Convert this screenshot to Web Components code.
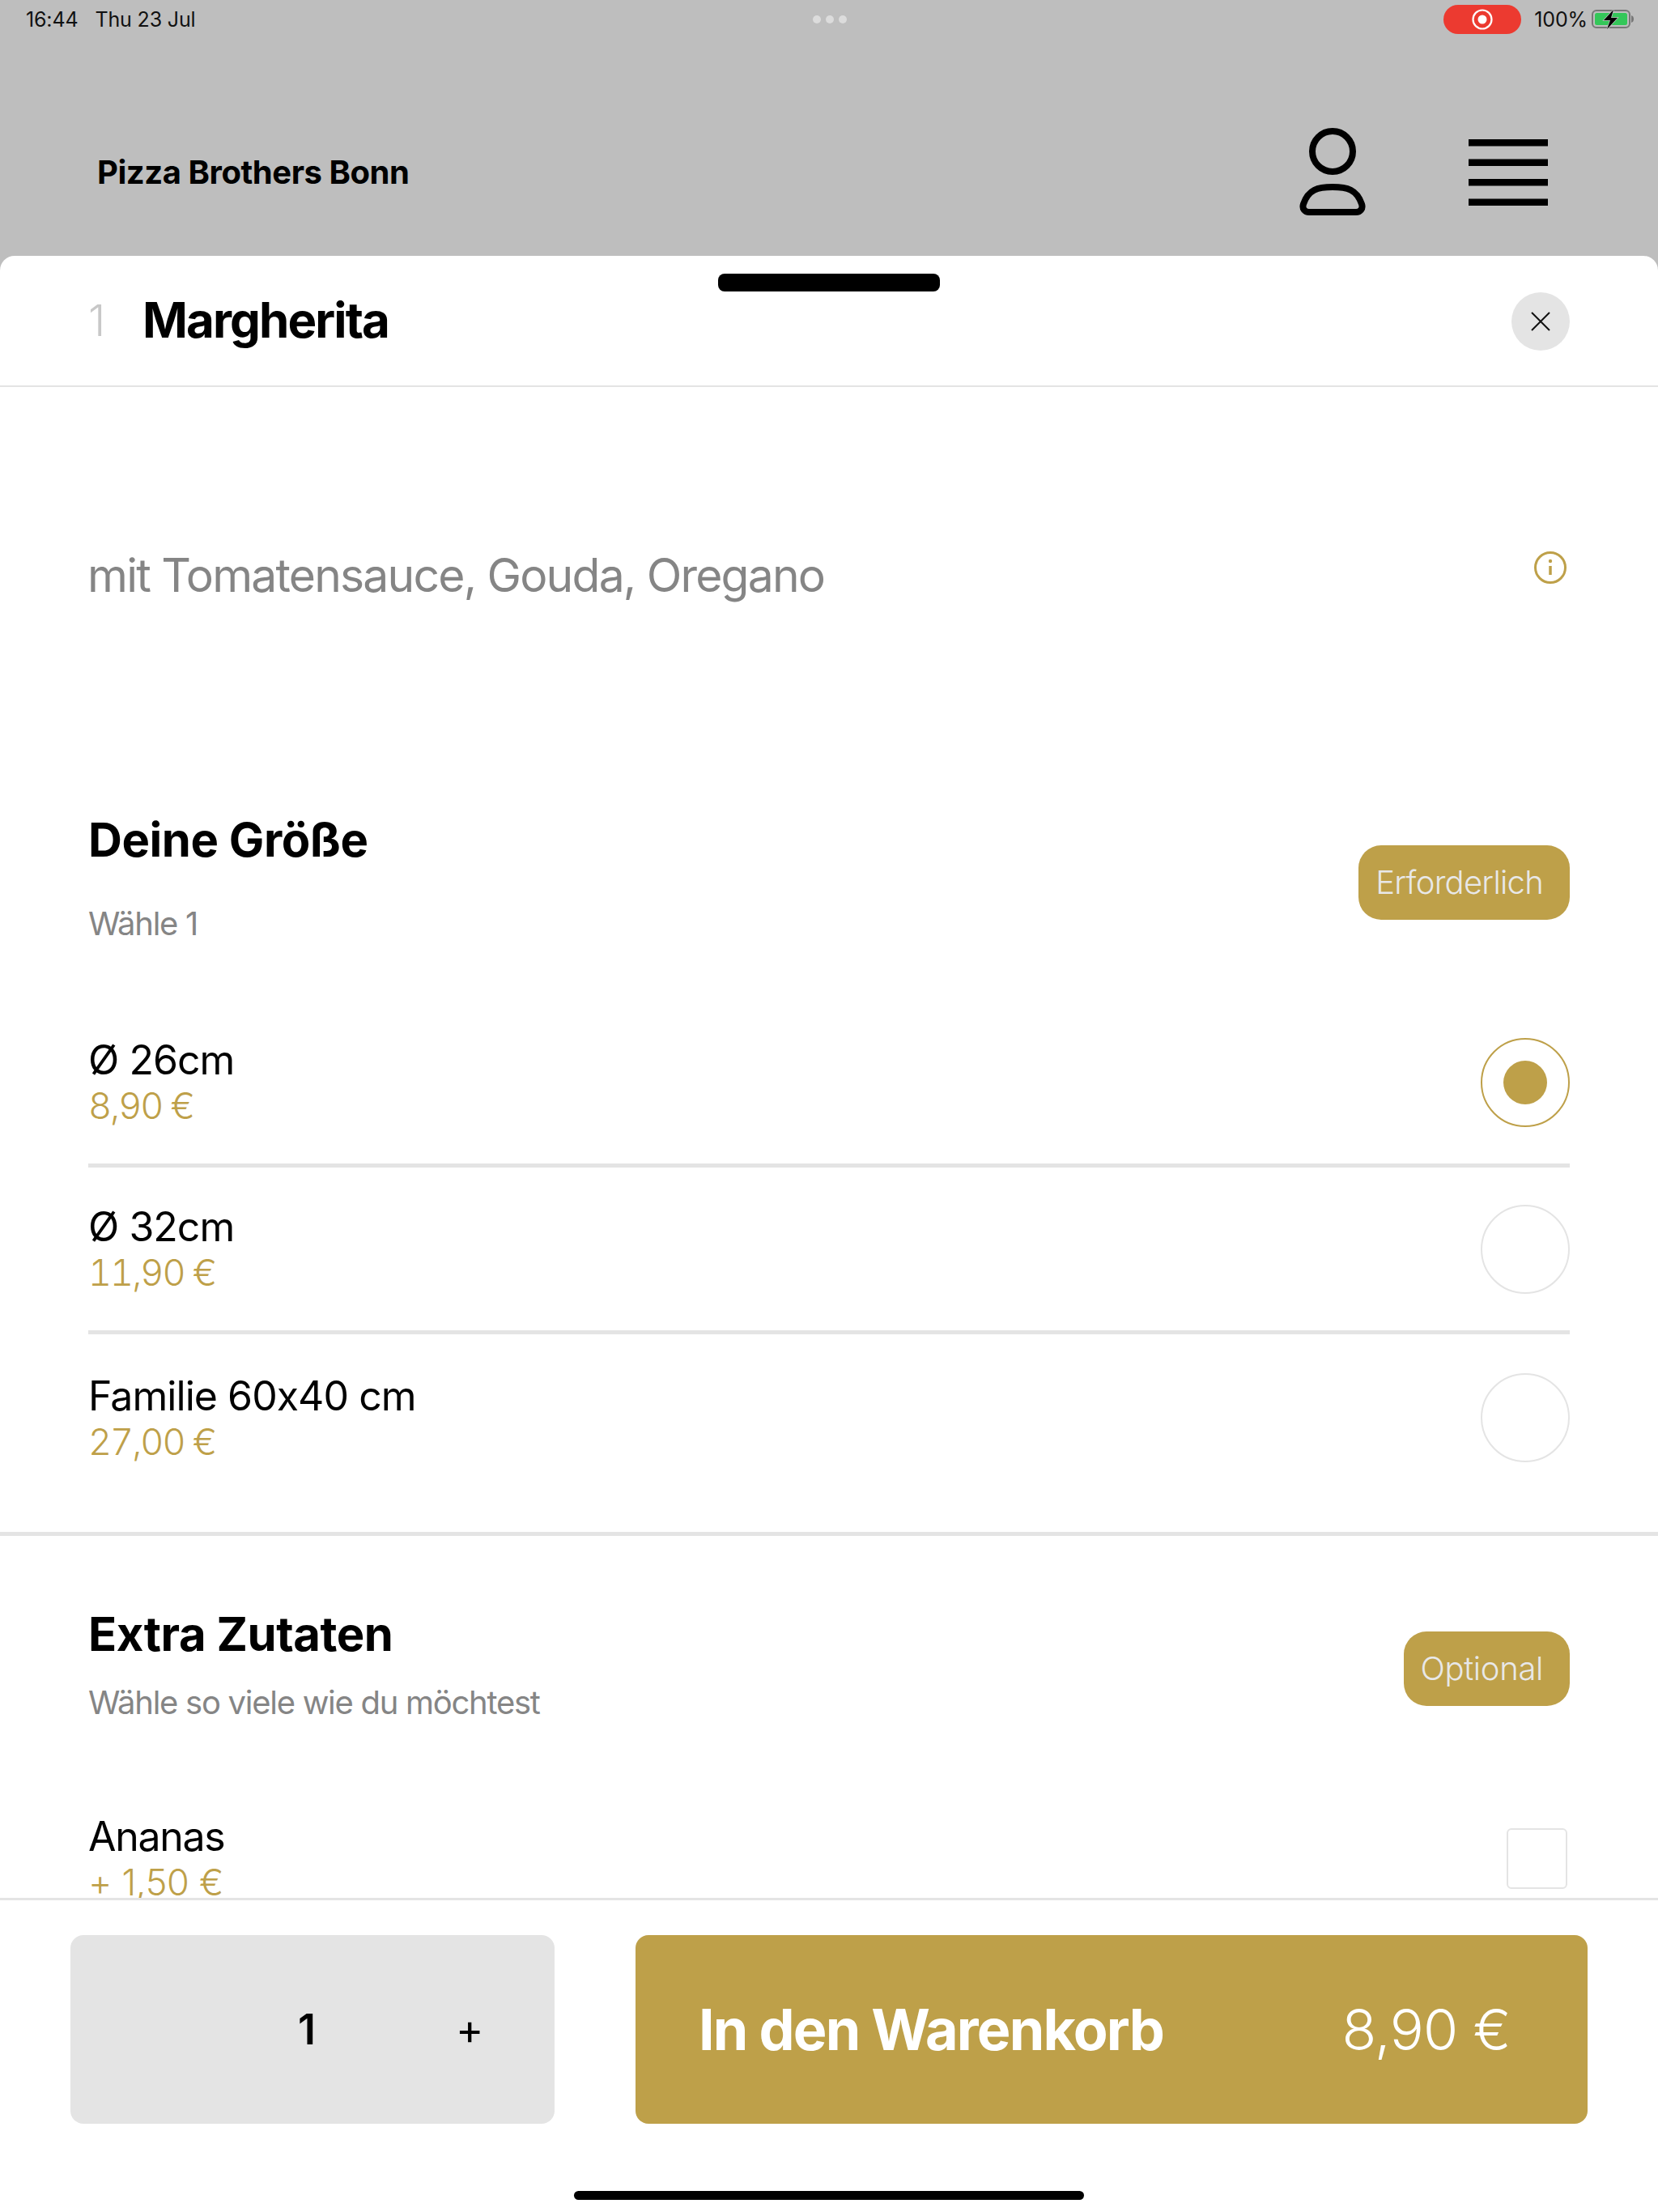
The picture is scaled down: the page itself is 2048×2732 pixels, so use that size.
<!DOCTYPE html>
<html lang="de">
<head>
<meta charset="UTF-8">
<title>Pizza Brothers Bonn</title>
<style>
    html, body { margin: 0; padding: 0; background: #fff; }
    body { font-family: Inter, "Liberation Sans", sans-serif; }
</style>
</head>
<body>
<pizza-app></pizza-app>

<script>
    const GOLD = '#bea049';

    // helper, every component gets its markup and style the same way
    class Base extends HTMLElement {
        constructor() {
            super();
            this.attachShadow({ mode: 'open' });
        }
        connectedCallback() {
            this.shadowRoot.innerHTML = `<style>${this.css()}</style>${this.html()}`;
        }
        css() { return ':host { display: block; }'; }
        html() { return '<slot></slot>'; }
    }

    class StatusBar extends Base {
        css() {
            return `
            :host { display: flex; align-items: center; height: 48px; padding: 0 30px 0 32px; font-size: 25px; color: #111; letter-spacing: -0.15px; }
            .side { flex: 1 1 0; display: flex; align-items: center; }
            .right { justify-content: flex-end; }
            .date { margin-left: 21px; }
            .dots { display: flex; justify-content: center; gap: 6px; }
            .dots i { width: 10px; height: 10px; border-radius: 50%; background: #dcdcdc; }
            .rec { width: 96px; height: 36px; border-radius: 18px; background: #ec3a30; display: flex; align-items: center; justify-content: center; margin-right: 16px; }
            .pct { margin-right: 5px; }
            svg { display: block; }`;
        }
        html() {
            return `
            <div class="side"><span>16:44</span><span class="date">Thu 23 Jul</span></div>
            <div class="dots"><i></i><i></i><i></i></div>
            <div class="side right">
                <div class="rec">
                    <svg width="26" height="26" viewBox="0 0 26 26"><circle cx="13" cy="13" r="11.5" fill="none" stroke="#fff" stroke-width="2.2"/><circle cx="13" cy="13" r="5.5" fill="#fff"/></svg>
                </div>
                <span class="pct">100%</span>
                <svg width="52" height="28" viewBox="0 0 52 28">
                    <rect x="1" y="3" width="46" height="21" rx="5" fill="none" stroke="#777" stroke-width="2"/>
                    <rect x="4" y="6" width="40" height="15" rx="2.5" fill="#34c759"/>
                    <path d="M49 9c2 .6 3 2.200 3 4.500s-1 3.900-3 4.500z" fill="#777"/>
                    <path d="M27 2 15 15h8l-4 11 13-14h-8z" fill="#000" stroke="#bebebe" stroke-width="1.5" paint-order="stroke"/>
                </svg>
            </div>`;
        }
    }

    class AppHeader extends Base {
        css() {
            return `
            :host { display: flex; align-items: center; box-sizing: border-box; height: 268px; padding: 62px 136px 0 120px; }
            .name { flex: 1; font-size: 40px; font-weight: 700; color: #000; letter-spacing: -0.45px; margin-top: -2px; }
            svg { display: block; }
            .person { margin-right: 122px; margin-top: -3px; }`;
        }
        html() {
            return `
            <div class="name">Pizza Brothers Bonn</div>
            <svg class="person" width="92" height="116" viewBox="0 0 92 116" fill="none" stroke="#000" stroke-width="8">
                <circle cx="46" cy="33" r="25"/>
                <path d="M46 77C64 77 76 80 82 98C84 104 80 108 75 108H17C12 108 8 104 10 98C16 80 28 77 46 77Z"/>
            </svg>
            <svg width="98" height="82" viewBox="0 0 98 82" fill="#000">
                <rect y="0" width="98" height="8.500"/><rect y="24.500" width="98" height="8.500"/><rect y="49" width="98" height="8.500"/><rect y="73.500" width="98" height="8.500"/>
            </svg>`;
        }
    }

    class SheetTitle extends Base {
        css() {
            return `
            :host { display: flex; align-items: center; flex: none; box-sizing: border-box; height: 162px; padding: 2px 109px 0; border-bottom: 2px solid #e4e4e4; }
            .num { width: 67px; font-size: 54px; font-weight: 300; color: #c8c8c8; margin-top: -3px; }
            .title { flex: 1; font-size: 60px; font-weight: 700; color: #000; letter-spacing: -1.9px; margin-top: -4px; }
            .close { width: 72px; height: 72px; border-radius: 50%; background: #e4e4e4; display: flex; align-items: center; justify-content: center; }`;
        }
        html() {
            return `
            <span class="num">1</span>
            <span class="title">Margherita</span>
            <div class="close"><svg width="24" height="24" viewBox="0 0 24 24" stroke="#111" stroke-width="2" fill="none"><path d="M1 1 23 23M23 1 1 23"/></svg></div>`;
        }
    }

    class MealInfo extends Base {
        css() {
            return `
            :host { display: flex; box-sizing: border-box; height: 524px; padding: 198px 109px 0 108px; font-size: 57px; font-weight: 400; color: #858585; letter-spacing: -1.8px; }
            .t { flex: 1; }
            svg { display: block; margin: 5px 4px 0 0; }`;
        }
        html() {
            return `
            <div class="t"><slot></slot></div>
            <svg width="40" height="40" viewBox="0 0 40 40" fill="none" stroke="${GOLD}"><circle cx="20" cy="20" r="18.500" stroke-width="3"/><path d="M20 18v11" stroke-width="3.500"/><circle cx="20" cy="12" r="2.200" fill="${GOLD}" stroke="none"/></svg>`;
        }
    }

    class GroupHead extends Base {
        css() {
            return `
            :host { display: flex; align-items: center; justify-content: space-between; box-sizing: border-box; padding: 0 109px; }
            .title { font-size: 58px; font-weight: 700; color: #000; letter-spacing: -0.45px; line-height: 70px; }
            .sub { font-size: 40px; font-weight: 400; color: #858585; letter-spacing: -1.28px; line-height: 50px; margin-top: var(--sub-gap, 0); }
            .pill { box-sizing: border-box; height: 92px; line-height: 92px; margin-top: 11px; padding: 0 33px 0 21px; border-radius: 28px; background: ${GOLD}; color: #e8e8e8; font-size: 40px; font-weight: 300; letter-spacing: var(--tag-ls, -0.75px); }`;
        }
        html() {
            return `
            <div><div class="title">${this.getAttribute('title')}</div><div class="sub">${this.getAttribute('sub')}</div></div>
            <div class="pill">${this.getAttribute('tag')}</div>`;
        }
    }

    class OptionRow extends Base {
        css() {
            return `
            :host { display: flex; align-items: center; justify-content: space-between; box-sizing: border-box; height: 206px; margin: 0 109px; border-bottom: var(--row-line, 5px solid #e4e4e4); }
            .name { font-size: 50px; font-weight: 400; color: #000; line-height: 59px; letter-spacing: -0.95px; }
            .price { font-size: 45px; font-weight: 300; color: ${GOLD}; line-height: 54px; letter-spacing: -2px; font-variant-numeric: tabular-nums; }
            .radio { box-sizing: border-box; width: 110px; height: 110px; border-radius: 50%; border: 2px solid #e4e4e4; display: flex; align-items: center; justify-content: center; }
            .radio.on { border-color: ${GOLD}; border-width: 2.500px; }
            .radio.on::after { content: ""; width: 54px; height: 54px; border-radius: 50%; background: ${GOLD}; }`;
        }
        html() {
            const on = this.hasAttribute('checked') ? ' on' : '';
            return `
            <div><div class="name">${this.getAttribute('name')}</div><div class="price">${this.getAttribute('price')}</div></div>
            <div class="radio${on}"></div>`;
        }
    }

    class ExtraRow extends Base {
        css() {
            return `
            :host { display: flex; justify-content: space-between; box-sizing: border-box; margin: 0 109px; }
            .name { font-size: 50px; font-weight: 400; color: #000; line-height: 59px; letter-spacing: -1.3px; margin-top: -2px; }
            .price { font-size: 45px; font-weight: 300; color: ${GOLD}; line-height: 54px; letter-spacing: -0.3px; }
            .box { box-sizing: border-box; width: 75px; height: 75px; margin: 17px 3px 0 0; border: 2.500px solid #e4e4e4; border-radius: 6px; }`;
        }
        html() {
            return `
            <div><div class="name">${this.getAttribute('name')}</div><div class="price">${this.getAttribute('price')}</div></div>
            <div class="box"></div>`;
        }
    }

    class OrderFooter extends Base {
        css() {
            return `
            :host { display: block; flex: none; box-sizing: border-box; height: 388px; border-top: 3px solid #e4e4e4; padding: 43px 87px 0; background: #fff; }
            .bar { display: flex; justify-content: space-between; height: 233px; }
            .qty { box-sizing: border-box; width: 598px; border-radius: 16px; background: #e4e4e4; display: flex; align-items: center; color: #000; padding-left: 281px; }
            .n { font-size: 52px; font-weight: 600; width: 195px; }
            .plus { font-size: 52px; font-weight: 400; }
            .add { box-sizing: border-box; width: 1176px; border-radius: 16px; background: ${GOLD}; color: #fff; display: flex; align-items: center; justify-content: space-between; padding: 0 95px 0 78px; font-size: 70px; }
            .label { font-weight: 700; letter-spacing: -1.8px; }
            .sum { font-weight: 300; letter-spacing: -0.7px; }
            .home { width: 630px; height: 11px; border-radius: 6px; background: #000; margin: 83px auto 0; }`;
        }
        html() {
            return `
            <div class="bar">
                <div class="qty"><span class="n">1</span><span class="plus">+</span></div>
                <div class="add"><span class="label">In den Warenkorb</span><span class="sum">8,90 €</span></div>
            </div>
            <div class="home"></div>`;
        }
    }

    class PizzaApp extends Base {
        css() {
            return `
            :host { display: flex; flex-direction: column; height: 2732px; width: 2048px; overflow: hidden; background: #bebebe; font-family: Inter, "Liberation Sans", sans-serif; }
            .sheet { position: relative; flex: 1; min-height: 0; display: flex; flex-direction: column; background: #fff; border-radius: 18px 18px 0 0; }
            .handle { position: absolute; left: 887px; top: 22px; width: 274px; height: 22px; border-radius: 8px; background: #000; }
            .scroll { flex: 1; min-height: 0; overflow: hidden; }
            .size { --sub-gap: 44px; }
            .rows { margin-top: 70px; }
            .last { --row-line: none; }
            .thick { height: 5px; margin-top: 38px; background: #e4e4e4; }
            .extra { --sub-gap: 25px; --tag-ls: -0.35px; margin-top: 86px; }
            .extra-row { margin-top: 113px; }`;
        }
        html() {
            return `
            <status-bar></status-bar>
            <app-header></app-header>
            <div class="sheet">
                <div class="handle"></div>
                <sheet-title></sheet-title>
                <div class="scroll">
                    <meal-info>mit Tomatensauce, Gouda, Oregano</meal-info>
                    <group-head class="size" title="Deine Größe" sub="Wähle 1" tag="Erforderlich"></group-head>
                    <div class="rows">
                        <option-row name="Ø 26cm" price="8,90 €" checked></option-row>
                        <option-row name="Ø 32cm" price="11,90 €"></option-row>
                        <option-row class="last" name="Familie 60x40 cm" price="27,00 €"></option-row>
                    </div>
                    <div class="thick"></div>
                    <group-head class="extra" title="Extra Zutaten" sub="Wähle so viele wie du möchtest" tag="Optional"></group-head>
                    <extra-row class="extra-row" name="Ananas" price="+ 1,50 €"></extra-row>
                </div>
                <order-footer></order-footer>
            </div>`;
        }
    }

    // children first so they are upgraded when the app renders its shadow
    customElements.define('status-bar', StatusBar);
    customElements.define('app-header', AppHeader);
    customElements.define('sheet-title', SheetTitle);
    customElements.define('meal-info', MealInfo);
    customElements.define('group-head', GroupHead);
    customElements.define('option-row', OptionRow);
    customElements.define('extra-row', ExtraRow);
    customElements.define('order-footer', OrderFooter);
    customElements.define('pizza-app', PizzaApp);
</script>
</body>
</html>
